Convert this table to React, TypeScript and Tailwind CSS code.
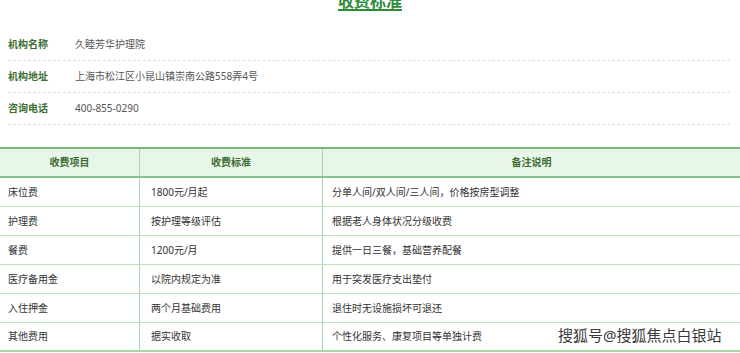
import React from 'react';

type InfoRow = { label: string; value: string };
type FeeRow = { item: string; standard: string; note: string };

const info: InfoRow[] = [
  { label: '机构名称', value: '久睦芳华护理院' },
  { label: '机构地址', value: '上海市松江区小昆山镇崇南公路558弄4号' },
  { label: '咨询电话', value: '400-855-0290' },
];

const fees: FeeRow[] = [
  { item: '床位费', standard: '1800元/月起', note: '分单人间/双人间/三人间，价格按房型调整' },
  { item: '护理费', standard: '按护理等级评估', note: '根据老人身体状况分级收费' },
  { item: '餐费', standard: '1200元/月', note: '提供一日三餐，基础营养配餐' },
  { item: '医疗备用金', standard: '以院内规定为准', note: '用于突发医疗支出垫付' },
  { item: '入住押金', standard: '两个月基础费用', note: '退住时无设施损坏可退还' },
  { item: '其他费用', standard: '据实收取', note: '个性化服务、康复项目等单独计费' },
];

// latin glyphs from Noto Sans (wider, closer to YaHei), CJK falls through
const font = { fontFamily: '"Noto Sans", "Noto Sans CJK SC", sans-serif' };

const App = () => {
  return (
    <div className="relative w-[740px] h-[353px] overflow-hidden bg-white text-[10px]" style={font}>
      <h2 className="-mt-[7px] text-center text-[16px] leading-[16px] font-bold text-[#2e8b3a] underline decoration-[2px] underline-offset-[2px]">
        收费标准
      </h2>

      <div className="mt-[20px] pl-2 pr-[10px]">
        {info.map((row) => (
          <div key={row.label} className="flex items-center h-[32px] border-b border-dashed border-[#cdeccd]">
            <span className="w-[67px] font-bold text-[#3a6e2e]">{row.label}</span>
            <span className="text-[#555]">{row.value}</span>
          </div>
        ))}
      </div>

      <div className="mt-[22px]">
        <div className="grid grid-cols-[140px_183px_1fr] h-[31px] bg-[#e8f5e9] border-t-2 border-b-2 border-t-[#7ab97c] border-b-[#86c58a] font-bold text-[#3a6e2e]">
          <div className="flex items-center justify-center border-r border-[#a5d6a7]">收费项目</div>
          <div className="flex items-center justify-center border-r border-[#a5d6a7]">收费标准</div>
          <div className="flex items-center justify-center">备注说明</div>
        </div>
        {fees.map((row, i) => (
          <div
            key={row.item}
            className={
              i === fees.length - 1
                ? 'grid grid-cols-[140px_183px_1fr] h-[29px] border-b-2 border-[#a8d8aa] text-[#333]'
                : 'grid grid-cols-[140px_183px_1fr] h-[29px] border-b border-[#bfe3c0] text-[#333]'
            }
          >
            <div className="flex items-center pl-2 border-r border-[#a5d6a7]">{row.item}</div>
            <div className="flex items-center pl-[11px] border-r border-[#a5d6a7]">{row.standard}</div>
            <div className="flex items-center pl-[9px]">{row.note}</div>
          </div>
        ))}
      </div>

      <div
        className="absolute left-[558px] top-[325px] text-[15px] leading-[20px] text-[#3a3a3a]"
        style={{ textShadow: '0 0 2px #fff, 0 0 2px #fff' }}
      >
        搜狐号@搜狐焦点白银站
      </div>
    </div>
  );
};

export default App;
